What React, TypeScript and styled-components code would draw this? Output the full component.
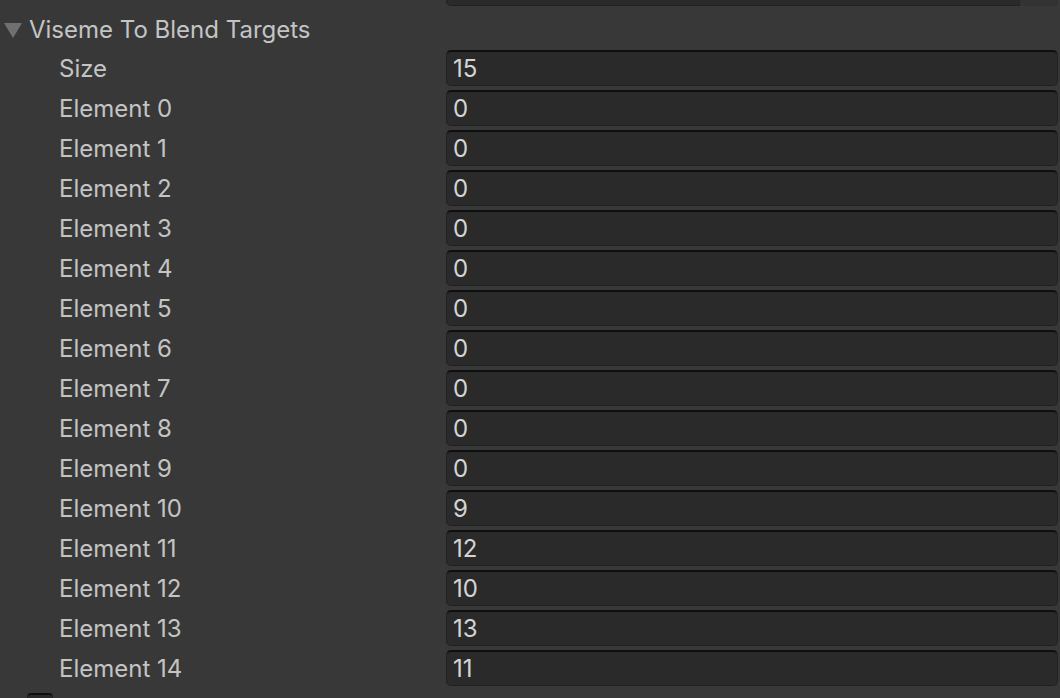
import React from "react";
import styled, { createGlobalStyle } from "styled-components";

const Global = createGlobalStyle`
  html, body { margin: 0; padding: 0; background: #383838; overflow: hidden; }
  body { font-family: Inter, "Noto Sans", "Liberation Sans", sans-serif; }
`;

const Panel = styled.div`
  width: 1060px;
  height: 698px;
  overflow: hidden;
  background: #383838;
  display: flex;
  flex-direction: column;
`;

const List = styled.div`
  display: flex;
  flex-direction: column;
  margin-top: -31px;
`;

const Row = styled.div`
  height: 40px;
  display: grid;
  grid-template-columns: 446px 612px;
  align-items: start;
  flex-shrink: 0;
`;

const Label = styled.div<{ $indent?: number }>`
  padding-left: ${(p) => p.$indent ?? 59}px;
  height: 40px;
  line-height: 39px;
  font-size: 24px;
  color: #c4c4c4;
  white-space: nowrap;
`;

const Field = styled.div`
  position: relative;
  margin-top: 1px;
  height: 36px;
  box-sizing: border-box;
  background: #2a2a2a;
  border: 1px solid #212121;
  border-top: 2px solid #0f0f0f;
  border-radius: 5px;
  padding-left: 6px;
  font-size: 24px;
  line-height: 34px;
  color: #d4d4d4;
`;

const PickerButton = styled.div`
  position: absolute;
  right: -1px;
  top: -2px;
  bottom: -1px;
  width: 38px;
  background: #333333;
  border-radius: 0 5px 5px 0;
  border-left: 1px solid #262626;
`;

const Header = styled.div`
  height: 40px;
  line-height: 39px;
  display: flex;
  align-items: center;
  gap: 7px;
  padding-left: 4px;
  font-size: 24px;
  color: #c4c4c4;
  flex-shrink: 0;
`;

const Arrow = styled.svg`
  width: 18px;
  height: 15px;
  display: block;
  margin-top: 2px;
`;

const CheckRow = styled.div`
  height: 40px;
  padding-left: 27px;
  padding-top: 4px;
  box-sizing: border-box;
  flex-shrink: 0;
`;

const CheckBox = styled.div`
  width: 26px;
  height: 26px;
  box-sizing: border-box;
  background: #2a2a2a;
  border: 1px solid #212121;
  border-top: 2px solid #0f0f0f;
  border-radius: 4px;
`;

const values = ["0", "0", "0", "0", "0", "0", "0", "0", "0", "0", "9", "12", "10", "13", "11"];

export default function App() {
  return (
    <Panel>
      <Global />
      <List>
        <Row>
          <Label />
          <Field>
            <PickerButton />
          </Field>
        </Row>
        <Header>
          <Arrow viewBox="0 0 18 15">
            <polygon points="0,0 18,0 9,15" fill="#707070" />
          </Arrow>
          <span>Viseme To Blend Targets</span>
        </Header>
        <Row>
          <Label>Size</Label>
          <Field>15</Field>
        </Row>
        {values.map((v, i) => (
          <Row key={i}>
            <Label>Element {i}</Label>
            <Field>{v}</Field>
          </Row>
        ))}
        <CheckRow>
          <CheckBox />
        </CheckRow>
      </List>
    </Panel>
  );
}
